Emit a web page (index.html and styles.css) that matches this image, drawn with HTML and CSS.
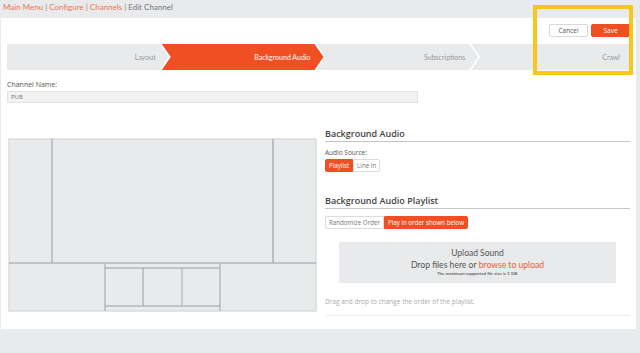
FILE: index.html
```html
<!DOCTYPE html>
<html>
<head>
<meta charset="utf-8">
<link rel="stylesheet" href="styles.css">
</head>
<body>
<div class="crumbs">
  <a class="crumb">Main Menu</a> <span class="sep">|</span> <a class="crumb">Configure</a> <span class="sep">|</span> <a class="crumb">Channels</a> <span class="sep">|</span> <span class="current">Edit Channel</span>
</div>
<div class="panel">
  <div class="toolbar">
    <button class="btn btn-cancel">Cancel</button>
    <button class="btn btn-save">Save</button>
  </div>
  <div class="steps">
    <div class="step first">Layout</div>
    <div class="step active">Background Audio</div>
    <div class="step">Subscriptions</div>
    <div class="step last">Crawl</div>
  </div>
  <div class="field">
    <label class="field-label">Channel Name:</label>
    <div class="input">PUB</div>
  </div>
  <div class="content">
    <div class="diagram-wrap">
      <svg class="diagram" width="309" height="175" viewBox="-1 -1 309 175">
        <rect x="0" y="0" width="307" height="172" fill="#e9eaec" stroke="#d3d4d8" stroke-width="1.2"/>
        <line x1="43" y1="0" x2="43" y2="124" stroke="#9a9ca5" stroke-width="1"/>
        <line x1="264" y1="0" x2="264" y2="124" stroke="#a9abb3" stroke-width="1.4"/>
        <line x1="0" y1="124" x2="307" y2="124" stroke="#9a9ca5" stroke-width="1"/>
        <line x1="96" y1="124" x2="96" y2="172" stroke="#b3b5bc" stroke-width="1.4"/>
        <line x1="211" y1="124" x2="211" y2="172" stroke="#b3b5bc" stroke-width="1.4"/>
        <line x1="96" y1="129" x2="211" y2="129" stroke="#9a9ca5" stroke-width="1"/>
        <line x1="96" y1="167" x2="211" y2="167" stroke="#9a9ca5" stroke-width="1"/>
        <line x1="134" y1="129" x2="134" y2="167" stroke="#9a9ca5" stroke-width="1"/>
        <line x1="173" y1="129" x2="173" y2="167" stroke="#a9abb3" stroke-width="1"/>
      </svg>
    </div>
    <div class="side">
      <h3 class="section-title">Background Audio</h3>
      <div class="small-label">Audio Source:</div>
      <div class="btn-group">
        <button class="seg seg-on">Playlist</button><button class="seg">Line In</button>
      </div>
      <h3 class="section-title second">Background Audio Playlist</h3>
      <div class="btn-group order">
        <button class="seg">Randomize Order</button><button class="seg seg-on">Play in order shown below</button>
      </div>
      <div class="upload">
        <div class="upload-title">Upload Sound</div>
        <div class="upload-drop">Drop files here or <span class="link">browse to upload</span></div>
        <div class="upload-note">The maximum supported file size is 1 GB.</div>
      </div>
      <div class="hint">Drag and drop to change the order of the playlist.</div>
      <div class="rule"></div>
    </div>
  </div>
</div>
<div class="highlight"></div>
</body>
</html>
```

FILE: styles.css
```css
* { box-sizing: border-box; }
html, body { margin: 0; padding: 0; }
body {
  background: #e9eaec;
  width: 640px;
  height: 353px;
  font-family: Lato, "Open Sans", sans-serif;
  color: #555;
  position: relative;
  overflow: hidden;
}
.crumbs {
  height: 18px;
  padding: 1px 0 0 3px;
  font-size: 8px;
  line-height: 12px;
  white-space: nowrap;
}
.crumb { color: #ef7350; }
.sep { color: #888; }
.current { color: #777; }

.panel {
  background: #fff;
  margin: 0 4px 0 1px;
  height: 311px;
  padding: 6px 6px 0 6px;
}
.toolbar {
  display: flex;
  justify-content: flex-end;
  gap: 3px;
  height: 13px;
}
.btn {
  font-family: "Open Sans", sans-serif;
  font-size: 6.5px;
  height: 13px;
  padding: 0;
  border-radius: 2px;
  line-height: 11px;
}
.btn-cancel {
  width: 39px;
  background: #fff;
  border: 1px solid #d8d8d8;
  color: #555;
}
.btn-save {
  width: 39px;
  background: #f04e23;
  border: 1px solid #f04e23;
  color: #fff;
}

.steps {
  display: flex;
  margin-top: 7px;
  width: 625px;
  height: 26px;
}
.step {
  flex: 1;
  margin-left: -7px;
  background: #e9eaec;
  color: #999;
  font-size: 7px;
  line-height: 26px;
  text-align: right;
  padding-right: 13px;
  clip-path: polygon(0 0, calc(100% - 9px) 0, 100% 50%, calc(100% - 9px) 100%, 0 100%, 9px 50%);
}
.step.first {
  margin-left: 0;
  clip-path: polygon(0 0, calc(100% - 9px) 0, 100% 50%, calc(100% - 9px) 100%, 0 100%);
}
.step.last {
  padding-right: 12px;
  clip-path: polygon(0 0, 100% 0, 100% 100%, 0 100%, 9px 50%);
}
.step.active {
  background: #f04e23;
  color: #fff;
}

.field { margin-top: 10px; }
.field-label {
  display: block;
  font-family: "Open Sans", sans-serif;
  font-size: 7px;
  line-height: 10px;
  color: #555;
}
.input {
  margin-top: 1px;
  width: 411px;
  height: 12px;
  background: #f3f3f4;
  border: 1px solid #e3e3e5;
  font-family: "Open Sans", sans-serif;
  font-size: 6px;
  line-height: 10px;
  padding-left: 3px;
  color: #777;
}

.content {
  display: grid;
  grid-template-columns: 318px 305px;
  margin-top: 24px;
}
.diagram-wrap { padding: 11px 0 0 1px; }
.diagram { display: block; }

.side { font-family: "Open Sans", sans-serif; }
.section-title {
  margin: 0;
  font-size: 9px;
  font-weight: 600;
  line-height: 13px;
  color: #444;
  padding-bottom: 1px;
  border-bottom: 1px solid #c4c4c6;
}
.section-title.second { margin-top: 22px; }
.small-label {
  margin-top: 5px;
  font-size: 6.5px;
  line-height: 11px;
  color: #555;
}
.btn-group {
  display: flex;
  margin-top: 1px;
}
.btn-group.order { margin-top: 7px; }
.seg {
  font-family: "Open Sans", sans-serif;
  font-size: 6.2px;
  height: 13px;
  line-height: 11px;
  padding: 0 3px;
  background: #fff;
  color: #777;
  border: 1px solid #dcdcdc;
  border-radius: 0;
}
.seg:first-child { border-radius: 2px 0 0 2px; }
.seg:last-child { border-radius: 0 2px 2px 0; }
.seg-on {
  background: #f04e23;
  border-color: #f04e23;
  color: #fff;
}
.upload {
  margin: 13px 14px 0 14px;
  height: 41px;
  background: #e9eaec;
  text-align: center;
  padding-top: 6px;
}
.upload-title {
  font-family: Lato, sans-serif;
  font-size: 8.5px;
  line-height: 11px;
  color: #555;
}
.upload-drop {
  font-family: Lato, sans-serif;
  font-size: 8.6px;
  line-height: 12px;
  color: #555;
}
.link { color: #ef5a33; }
.upload-note {
  font-family: Lato, sans-serif;
  font-size: 4.5px;
  line-height: 6px;
  color: #333;
}
.hint {
  margin-top: 14px;
  font-size: 6.5px;
  line-height: 10px;
  color: #aaa;
}
.rule {
  margin-top: 8px;
  border-top: 1px solid #eee;
}

.highlight {
  position: absolute;
  left: 533px;
  top: 5px;
  width: 100px;
  height: 70px;
  border: 4px solid #f8c51c;
}
```
